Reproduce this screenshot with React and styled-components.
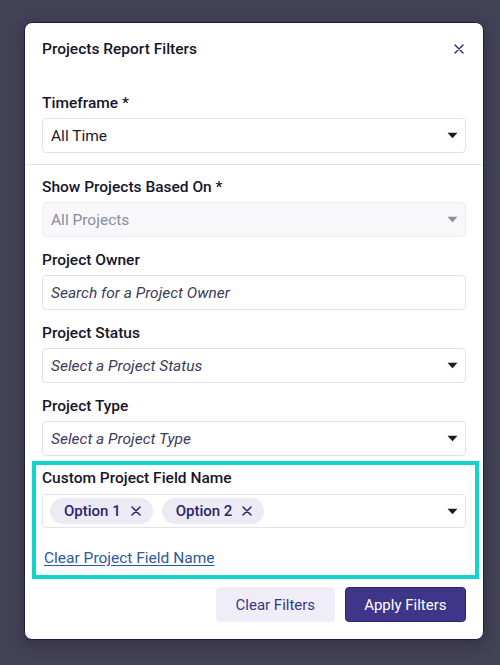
import React from "react";
import styled, { createGlobalStyle } from "styled-components";

const GlobalStyle = createGlobalStyle`
  html, body {
    margin: 0;
    padding: 0;
    background: #434155;
    font-family: Roboto, "Liberation Sans", sans-serif;
  }
`;

const Page = styled.div`
  width: 500px;
  height: 665px;
  padding: 22px 0 0 24px;
  box-sizing: border-box;
`;

const Modal = styled.div`
  width: 460px;
  box-sizing: border-box;
  background: #ffffff;
  border: 1px solid #1e1b4e;
  border-radius: 8px;
  box-shadow: 0 4px 14px rgba(0, 0, 0, 0.25);
  padding-bottom: 17px;
`;

const Header = styled.div`
  display: flex;
  align-items: center;
  justify-content: space-between;
  padding: 16px 17px 0 17px;
  height: 20px;
`;

const Title = styled.h2`
  margin: 0;
  font-size: 15.5px;
  line-height: 20px;
  font-weight: 500;
  color: #16152b;
`;

const CloseButton = styled.button`
  border: none;
  background: none;
  padding: 0;
  margin-right: 2px;
  display: flex;
  cursor: pointer;
`;

const Section = styled.div`
  display: flex;
  flex-direction: column;
  gap: 13px;
  padding: ${(p) => p.$pad};
  border-bottom: ${(p) => (p.$divider ? "1px solid #e4e3ec" : "none")};
`;

const FieldWrap = styled.div`
  display: flex;
  flex-direction: column;
  gap: ${(p) => p.$gap || "5px"};
`;

const Label = styled.label`
  font-size: 15.5px;
  line-height: 20px;
  font-weight: 500;
  color: #16152b;
`;

const Control = styled.div`
  display: flex;
  align-items: center;
  justify-content: space-between;
  height: 35px;
  box-sizing: border-box;
  padding: 0 7px 0 8px;
  border: 1px solid ${(p) => (p.$disabled ? "#ededf3" : "#e2e1ec")};
  background: ${(p) => (p.$disabled ? "#f8f8fb" : "#ffffff")};
  border-radius: 4px;
  font-size: 15.5px;
  color: ${(p) => (p.$disabled ? "#8c8b9c" : p.$placeholder ? "#3d3b5c" : "#1b1a2e")};
  font-style: ${(p) => (p.$placeholder ? "italic" : "normal")};
`;

const MultiControl = styled(Control)`
  height: 34px;
  padding: 0 7px 0 7px;
`;

const Chips = styled.div`
  display: flex;
  gap: 9px;
`;

const Chip = styled.span`
  display: inline-flex;
  align-items: center;
  gap: 10px;
  height: 26px;
  padding: 0 12px 0 14px;
  border-radius: 13px;
  background: #ecebf5;
  color: #2a2570;
  font-size: 15px;
  font-weight: 500;
  font-style: normal;
`;

const Highlight = styled.div`
  display: flex;
  flex-direction: column;
  margin: -8px -13px 0 -10px;
  padding: 3px 9px 7px 6px;
  border: 4px solid #14d3c9;
`;

const ClearLink = styled.a`
  margin: 20px 0 0 2px;
  font-size: 15.5px;
  line-height: 20px;
  color: #2d5a9c;
  text-decoration: underline;
  text-underline-offset: 2px;
  cursor: pointer;
`;

const Footer = styled.div`
  display: flex;
  justify-content: flex-end;
  gap: 10px;
  padding: 8px 17px 0 17px;
`;

const Button = styled.button`
  height: 35px;
  padding: 0 18.5px;
  border-radius: 4px;
  font-family: inherit;
  font-size: 15px;
  cursor: pointer;
  border: 1px solid ${(p) => (p.$primary ? "#2c2575" : "#efeef8")};
  background: ${(p) => (p.$primary ? "#3f3589" : "#efeef8")};
  color: ${(p) => (p.$primary ? "#ffffff" : "#3b3688")};
`;

const Caret = ({ color = "#1a1a2a" }) => (
  <svg width="11" height="7" viewBox="0 0 11 7">
    <path d="M0.5 0.8 H10.5 L5.5 6.2 Z" fill={color} />
  </svg>
);

const Cross = ({ size = 10, color = "#2a2570", stroke = 1.5 }) => (
  <svg width={size} height={size} viewBox="0 0 10 10">
    <path d="M1 1 L9 9 M9 1 L1 9" stroke={color} strokeWidth={stroke} strokeLinecap="round" />
  </svg>
);

function Field({ label, value, placeholder, disabled, noCaret }) {
  return (
    <FieldWrap>
      <Label>{label}</Label>
      <Control $placeholder={placeholder} $disabled={disabled}>
        <span>{value}</span>
        {!noCaret && <Caret color={disabled ? "#8c8b9c" : "#1a1a2a"} />}
      </Control>
    </FieldWrap>
  );
}

export default function App() {
  return (
    <>
      <GlobalStyle />
      <Page>
        <Modal>
          <Header>
            <Title>Projects Report Filters</Title>
            <CloseButton aria-label="Close">
              <Cross size={10} color="#2b2a7a" stroke={1.4} />
            </CloseButton>
          </Header>

          <Section $divider $pad="34px 17px 11px 17px">
            <Field label="Timeframe *" value="All Time" />
          </Section>

          <Section $pad="12px 17px 0 17px">
            <Field label="Show Projects Based On *" value="All Projects" disabled />
            <Field label="Project Owner" value="Search for a Project Owner" placeholder noCaret />
            <Field label="Project Status" value="Select a Project Status" placeholder />
            <Field label="Project Type" value="Select a Project Type" placeholder />

            <Highlight>
              <FieldWrap $gap="6px">
                <Label>Custom Project Field Name</Label>
                <MultiControl>
                  <Chips>
                    <Chip>
                      Option 1<Cross size={10} />
                    </Chip>
                    <Chip>
                      Option 2<Cross size={10} />
                    </Chip>
                  </Chips>
                  <Caret />
                </MultiControl>
              </FieldWrap>
              <ClearLink>Clear Project Field Name</ClearLink>
            </Highlight>
          </Section>

          <Footer>
            <Button>Clear Filters</Button>
            <Button $primary>Apply Filters</Button>
          </Footer>
        </Modal>
      </Page>
    </>
  );
}
